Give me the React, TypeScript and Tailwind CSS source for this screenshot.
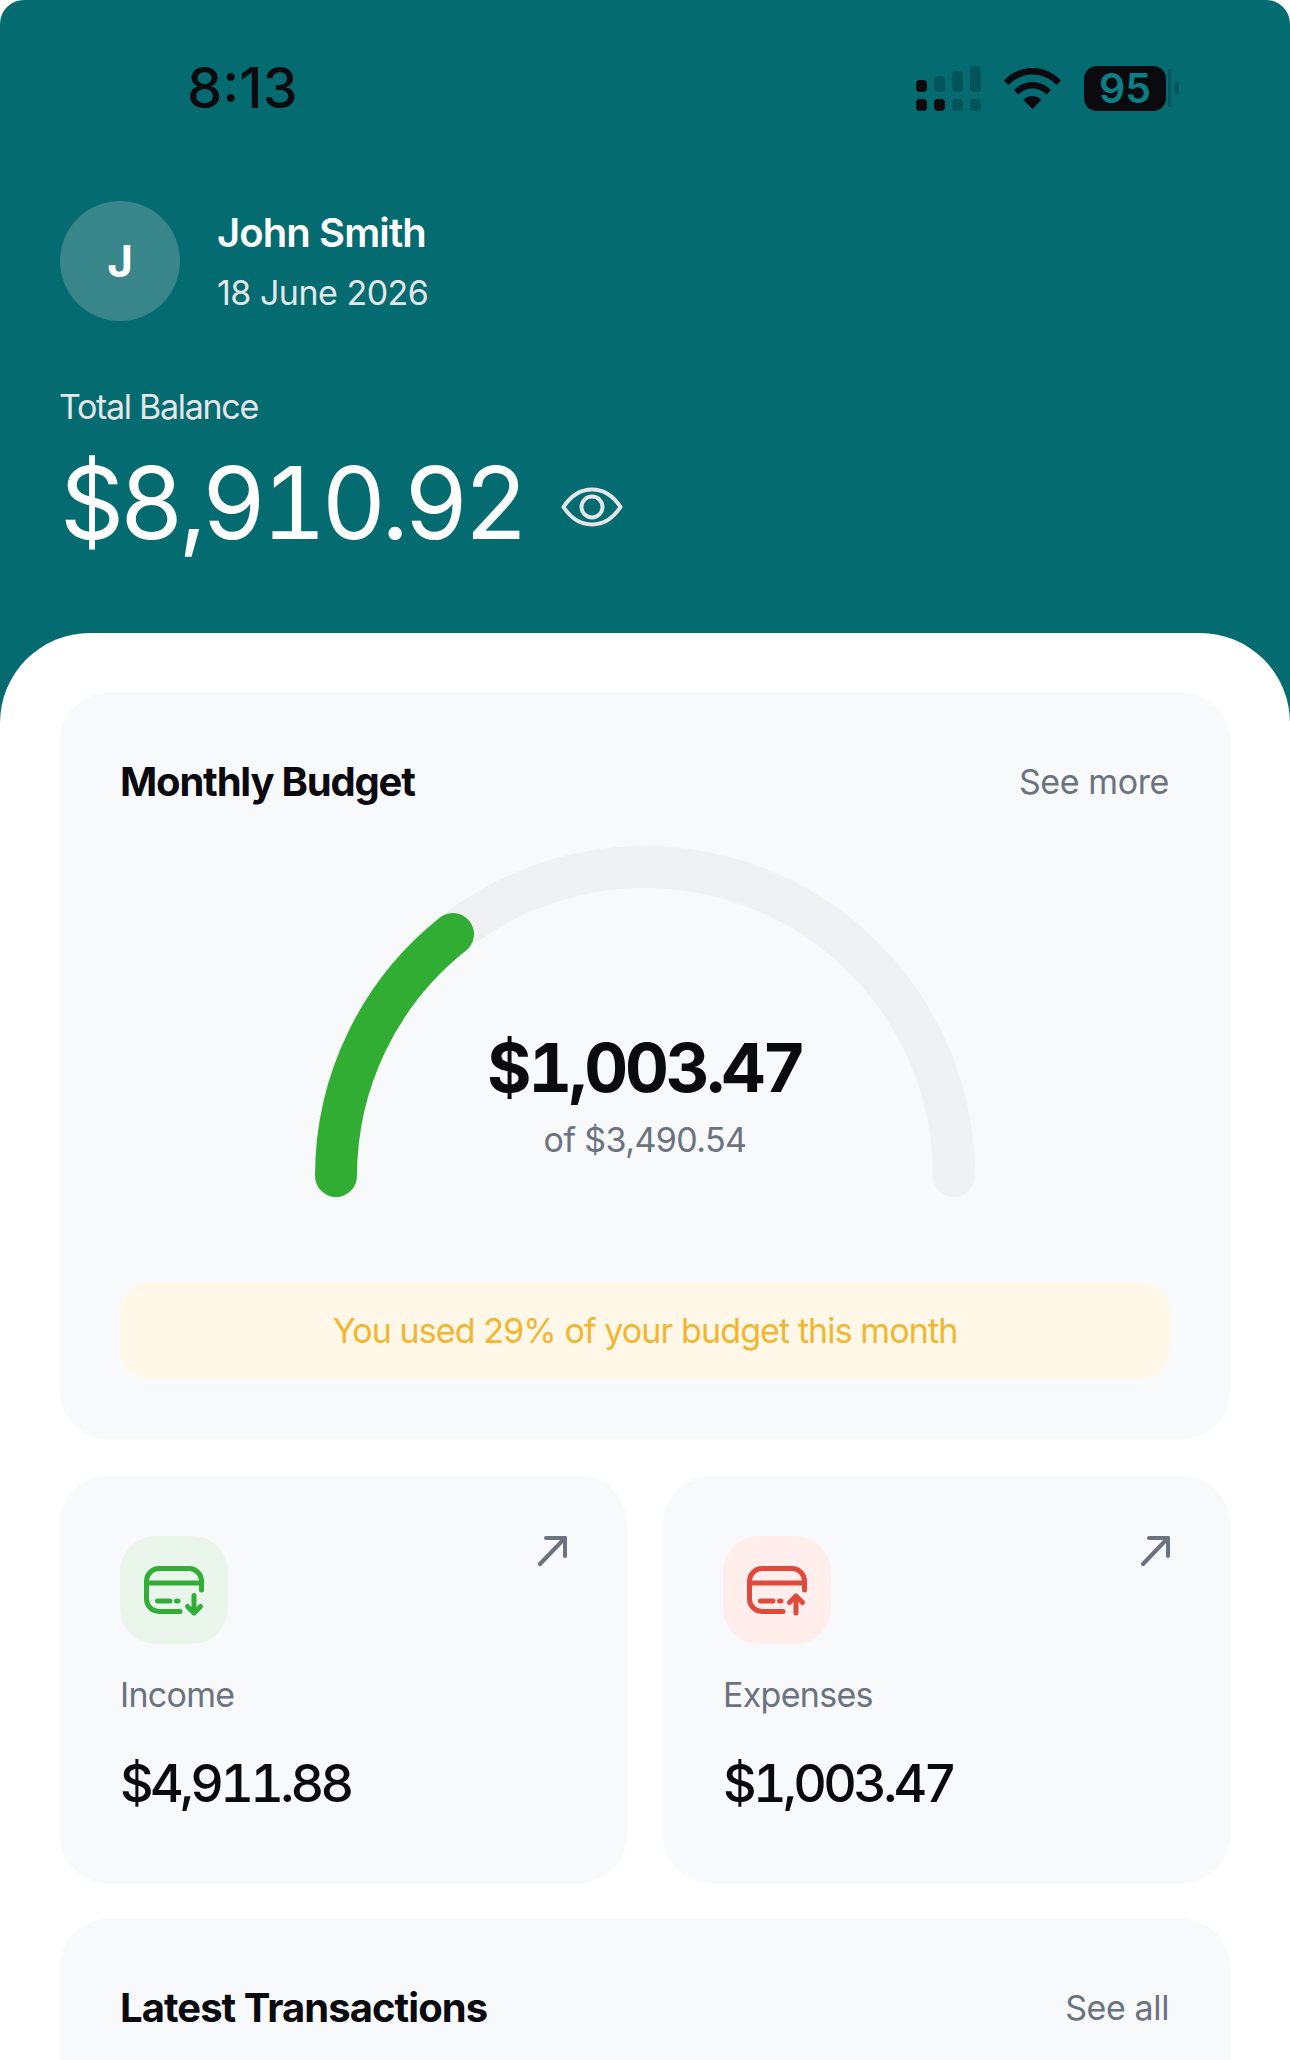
const font = "font-['Inter','Liberation_Sans',sans-serif]";

function SignalIcon() {
  const on = "#0a0a0f";
  const off = "#00545a";
  return (
    <svg width="65" height="45" viewBox="0 0 65 45">
      <rect x="0" y="14" width="11" height="12" rx="4" fill={on} />
      <rect x="18" y="10" width="11" height="16" rx="4" fill={off} />
      <rect x="36" y="5" width="11" height="21" rx="4" fill={off} />
      <rect x="54" y="0" width="11" height="26" rx="4" fill={off} />
      <rect x="0" y="33" width="11" height="12" rx="4" fill={on} />
      <rect x="18" y="33" width="11" height="12" rx="4" fill={on} />
      <rect x="36" y="33" width="11" height="12" rx="4" fill={off} />
      <rect x="54" y="33" width="11" height="12" rx="4" fill={off} />
    </svg>
  );
}

function WifiIcon() {
  return (
    <svg width="57" height="41" viewBox="0 0 57 41" fill="#0a0a0f">
      <path d="M0 12.5C7.5 4.5 17.5 0 28.5 0S49.5 4.5 57 12.500L52.500 17C46 10.500 37.500 6.500 28.500 6.500S11 10.500 4.500 17Z" />
      <path d="M10 22C15 17 21.500 14 28.500 14S42 17 47 22L42.500 26.500C39 23 34 20.500 28.500 20.500S18 23 14.500 26.500Z" />
      <path d="M19.500 32C22 29.500 25 28 28.500 28S35 29.500 37.500 32L28.500 41Z" />
    </svg>
  );
}

function Battery() {
  return (
    <div className="flex items-center">
      <div className="flex h-[45px] w-[82px] items-center justify-center rounded-[13px] bg-[#0a0a0f] text-[41px] leading-none font-semibold text-[#0b7f84]">
        95
      </div>
      <div className="ml-[2px] h-[38px] w-[3px] rounded-r-[2px] bg-[#00585e]" />
      <div className="ml-[3px] h-[14px] w-[5px] rounded-r-[4px] bg-[#00585e]" />
    </div>
  );
}

function EyeIcon() {
  return (
    <svg width="62" height="40" viewBox="0 0 62 40" fill="none" stroke="#e4e7ea" strokeWidth="4">
      <path d="M2.500 20C10 8.500 19.500 2.500 31 2.500S52 8.500 59.500 20C52 31.500 42.500 37.500 31 37.500S10 31.500 2.500 20Z" strokeLinejoin="round" />
      <circle cx="31" cy="20" r="10.500" />
    </svg>
  );
}

function Gauge() {
  return (
    <svg width="660" height="351" viewBox="0 0 660 351" fill="none" strokeWidth="42" strokeLinecap="round">
      <path d="M21 330A309 309 0 0 1 639 330" stroke="#f0f1f3" />
      <path d="M21 330A309 309 0 0 1 138 88" stroke="#32ad33" />
    </svg>
  );
}

function CardIcon({ kind }: { kind: "in" | "out" }) {
  const color = kind === "in" ? "#32ad38" : "#e04a3c";
  return (
    <svg width="108" height="108" viewBox="0 0 108 108" fill="none" stroke={color} strokeWidth="5" strokeLinecap="round" strokeLinejoin="round">
      <path d="M81.500 54V45A12.500 12.500 0 0 0 69 32.500H39A12.500 12.500 0 0 0 26.500 45V63A12.500 12.500 0 0 0 39 75.500H60" />
      <path d="M26.500 47H81.500" />
      <path d="M37.500 65H50" />
      <path d="M56.500 65H58" />
      {kind === "in" ? (
        <>
          <path d="M74 59.500V76" />
          <path d="M67.500 70.500L74 77L80.500 70.500" />
        </>
      ) : (
        <>
          <path d="M73 61V77" />
          <path d="M66.500 66.500L73 60L79.500 66.500" />
        </>
      )}
    </svg>
  );
}

function ArrowIcon() {
  return (
    <svg width="32" height="31" viewBox="0 0 32 31" fill="none" stroke="#6b7280" strokeWidth="4" strokeLinecap="round" strokeLinejoin="round">
      <path d="M5 28L30 2" />
      <path d="M11 2H30V20" />
    </svg>
  );
}

function StatCard({ kind, label, value }: { kind: "in" | "out"; label: string; value: string }) {
  return (
    <div className="rounded-[48px] bg-[#f8f9fb] pt-[60px] pr-[60px] pb-[69px] pl-[60px]">
      <div className="flex items-start justify-between">
        <div className={`flex h-[108px] w-[108px] items-center justify-center rounded-[36px] ${kind === "in" ? "bg-[#eaf6ec]" : "bg-[#ffeeeb]"}`}>
          <CardIcon kind={kind} />
        </div>
        <ArrowIcon />
      </div>
      <div className="mt-[29px] text-[34px] leading-[44px] tracking-[-0.7px] text-[#6b7280]">{label}</div>
      <div className="mt-[37px] text-[52px] leading-[60px] font-medium tracking-[-3.7px] text-[#0a0a0f] tabular-nums">{value}</div>
    </div>
  );
}

function SectionHead({ title, action, tight }: { title: string; action: string; tight?: boolean }) {
  return (
    <div className="flex items-center justify-between">
      <h2 className={`text-[40px] leading-[58px] font-bold text-[#0a0a0f] ${tight ? "tracking-[-1.2px]" : "tracking-[-0.95px]"}`}>{title}</h2>
      <span className="pr-[1px] text-[34px] leading-[58px] tracking-[-0.4px] text-[#6b7280]">{action}</span>
    </div>
  );
}

export default function App() {
  return (
    <div className={`h-[2060px] overflow-hidden bg-white ${font}`}>
      <div className="rounded-t-[24px] bg-[#046b70]">
        <header className="px-[60px] pt-[58px] pb-[75px]">
          <div className="flex h-[60px] items-center justify-between pr-[51px] pl-[127px]">
            <span className="text-[56px] leading-none font-medium text-[#0a0a0f]">8:13</span>
            <div className="flex items-center gap-[23px]">
              <SignalIcon />
              <WifiIcon />
              <Battery />
            </div>
          </div>
          <div className="mt-[83px] flex items-center gap-[37px]">
            <div className="flex h-[120px] w-[120px] items-center justify-center rounded-full bg-[#388689] text-[44px] font-bold text-white">
              J
            </div>
            <div className="pt-[4px]">
              <div className="text-[40px] leading-[56px] font-semibold tracking-[-0.9px] text-white">John Smith</div>
              <div className="mt-[4px] text-[34px] leading-[56px] tracking-[-0.5px] text-[#e4e7ea]">18 June 2026</div>
            </div>
          </div>
          <div className="mt-[64px] -ml-[1px] text-[34px] leading-[44px] tracking-[-1.3px] text-[#e4e7ea]">Total Balance</div>
          <div className="mt-[19px] flex items-center gap-[37px]">
            <span className="text-[100px] leading-[110px] tracking-[-4.8px] text-white tabular-nums">$8,910.92</span>
            <span className="mt-[7px]">
              <EyeIcon />
            </span>
          </div>
        </header>
        <main className="rounded-t-[90px] bg-white px-[60px] pt-[60px]">
          <section className="rounded-[48px] bg-[#f8f9fb] p-[60px]">
            <SectionHead title="Monthly Budget" action="See more" tight />
            <div className="relative mt-[35px] flex justify-center">
              <Gauge />
              <div className="absolute inset-x-0 top-[183px] text-center">
                <div className="text-[68px] leading-[76px] font-bold tracking-[-3.2px] text-[#0a0a0f] tabular-nums">$1,003.47</div>
                <div className="mt-[13px] text-[34px] leading-[44px] tracking-[-0.6px] text-[#6b7280]">of $3,490.54</div>
              </div>
            </div>
            <div className="mt-[85px] flex h-[97px] items-center justify-center rounded-[30px] bg-[#fff8e8] text-[34px] tracking-[-0.9px] text-[#f2b52f]">
              You used 29% of your budget this month
            </div>
          </section>
          <div className="mt-[37px] grid grid-cols-2 gap-[36px]">
            <StatCard kind="in" label="Income" value="$4,911.88" />
            <StatCard kind="out" label="Expenses" value="$1,003.47" />
          </div>
          <section className="mt-[36px] h-[400px] rounded-[48px] bg-[#f8f9fb] p-[60px]">
            <SectionHead title="Latest Transactions" action="See all" />
          </section>
        </main>
      </div>
    </div>
  );
}
